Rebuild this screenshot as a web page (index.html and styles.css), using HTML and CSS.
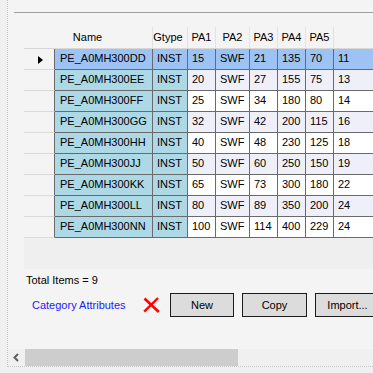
FILE: index.html
```html
<!DOCTYPE html>
<html lang="en">
<head>
    <meta charset="UTF-8">
    <meta name="viewport" content="width=device-width, initial-scale=1.0">
    <title>Category Items</title>
    <link rel="stylesheet" href="styles.css">
</head>
<body>
  <div id="painel">
    <div class="linha-topo"></div>

    <div class="grade">
      <div class="tabela" id="tabela">
        <div class="cab canto"></div>
        <div class="cab nome">Name</div>
        <div class="cab gtype">Gtype</div>
        <div class="cab">PA1</div>
        <div class="cab">PA2</div>
        <div class="cab">PA3</div>
        <div class="cab">PA4</div>
        <div class="cab">PA5</div>
        <div class="cab ultimo"></div>
      </div>
    </div>

    <p class="total" id="total"></p>

    <div class="acoes">
      <a class="link-cat" href="#">Category Attributes</a>
      <svg class="apagar" width="17" height="16" viewBox="0 0 17 16">
        <path d="M1.5 1.5 L15.8 15" stroke="#f00" stroke-width="2.6" fill="none"/>
        <path d="M15 1 L1.2 14.6" stroke="#f00" stroke-width="2.3" fill="none"/>
      </svg>
      <button class="btn">New</button>
      <button class="btn largo">Copy</button>
      <button class="btn largo">Import...</button>
    </div>

    <div class="barra">
      <div class="seta-esq">
        <svg width="17" height="17" viewBox="0 0 17 17">
          <polyline points="10,5 6.5,8.5 10,12" stroke="#606060" stroke-width="2" fill="none"/>
        </svg>
      </div>
      <div class="polegar"></div>
    </div>
  </div>

  <script>
    const itens = [
      ["PE_A0MH300DD", "INST", 15, "SWF", 21, 135, 70, 11],
      ["PE_A0MH300EE", "INST", 20, "SWF", 27, 155, 75, 13],
      ["PE_A0MH300FF", "INST", 25, "SWF", 34, 180, 80, 14],
      ["PE_A0MH300GG", "INST", 32, "SWF", 42, 200, 115, 16],
      ["PE_A0MH300HH", "INST", 40, "SWF", 48, 230, 125, 18],
      ["PE_A0MH300JJ", "INST", 50, "SWF", 60, 250, 150, 19],
      ["PE_A0MH300KK", "INST", 65, "SWF", 73, 300, 180, 22],
      ["PE_A0MH300LL", "INST", 80, "SWF", 89, 350, 200, 24],
      ["PE_A0MH300NN", "INST", 100, "SWF", 114, 400, 229, 24]
    ];

    const tabela = document.getElementById('tabela');

    itens.forEach((item, i) => {
      const cabLinha = document.createElement('div');
      cabLinha.className = 'cab-linha';
      if (i === 0) {
        cabLinha.innerHTML = '<span class="seta"></span>';
      }
      tabela.appendChild(cabLinha);

      let classeLinha = i % 2 === 1 ? 'alt' : '';
      if (i === 0) classeLinha = 'sel';

      item.forEach((valor, c) => {
        const cel = document.createElement('div');
        cel.className = 'cel ' + classeLinha + (c < 2 ? ' chave' : '');
        if (c === 0) cel.classList.add('nome');
        cel.innerText = valor;
        tabela.appendChild(cel);
      });
    });

    document.getElementById('total').innerText = `Total Items = ${itens.length}`;
  </script>
</body>
</html>
```

FILE: styles.css
```css
*{
  margin: 0;
  padding: 0;
  box-sizing: border-box;
}

body{
  height: 373px;
  overflow: hidden;
  background: #f0f0f0;
  color: #000;
  font-family: "Liberation Sans", Arial, sans-serif;
  font-size: 11px;
}

#painel{
  margin-left: 7px;
  height: 367px;
  display: flex;
  flex-direction: column;
  overflow: hidden;
  background: #f4f4f4;
  border-left: 1px dotted #c4c4c4;
  border-bottom: 1px dotted #c4c4c4;
}

.linha-topo{
  margin: 12px 0 0 6px;
  border-top: 1px solid #a0a0a0;
}

.grade{
  margin: 14px 0 0 16px;
  height: 242px;
  overflow: hidden;
  background: #efefef;
}

.tabela{
  display: grid;
  grid-template-columns: 31px 98px 35px 28px 34px 28px 28px 28px 60px;
  width: 370px;
}

.cab{
  height: 22px;
  line-height: 21px;
  text-align: center;
  white-space: nowrap;
  background: #f4f4f4;
  border-right: 1px solid #e2e2e2;
  border-bottom: 1px solid #d8d8d8;
}

.cab.canto, .cab.ultimo{
  border-right: none;
}

.cab.nome{
  padding-right: 32px;
}

.cab.gtype{
  padding-right: 4px;
}

.cab-linha{
  height: 21px;
  display: flex;
  align-items: center;
  justify-content: center;
  padding: 1px 0 0 3px;
  background: #f4f4f4;
  border-right: 1px solid #6a6a6a;
  border-bottom: 1px solid #dadada;
}

.seta{
  width: 0;
  height: 0;
  border-left: 5px solid #000;
  border-top: 4px solid transparent;
  border-bottom: 4px solid transparent;
}

.cel{
  height: 21px;
  line-height: 18px;
  padding: 0 0 2px 4px;
  white-space: nowrap;
  overflow: hidden;
  background: #fff;
  border-right: 1px solid #6a6a6a;
  border-bottom: 1px solid #6a6a6a;
}

.cel.nome{
  padding-left: 5px;
}

.cel.alt{
  background: #efeffa;
}

.cel.chave{
  background: #add8e6;
}

.cel.sel{
  background: #9dc3f4;
}

.total{
  margin: 5px 0 0 18px;
  line-height: 13px;
}

.acoes{
  display: flex;
  align-items: center;
  height: 24px;
  margin: 6px 0 0 24px;
}

.link-cat{
  flex-shrink: 0;
  width: 111px;
  color: #1a1aff;
  text-decoration: none;
}

.apagar{
  flex-shrink: 0;
  margin-right: 10px;
}

.btn{
  flex-shrink: 0;
  width: 64px;
  height: 24px;
  margin-right: 8px;
  border: 1px solid #1c1c1c;
  background: #dcdcdc;
  color: #000;
  font-family: inherit;
  font-size: 11px;
}

.btn.largo{
  width: 65px;
}

.barra{
  margin-top: auto;
  height: 17px;
  display: flex;
  background: #f0f0f0;
}

.seta-esq{
  width: 17px;
  flex-shrink: 0;
}

.polegar{
  width: 213px;
  background: #cdcdcd;
}
```
